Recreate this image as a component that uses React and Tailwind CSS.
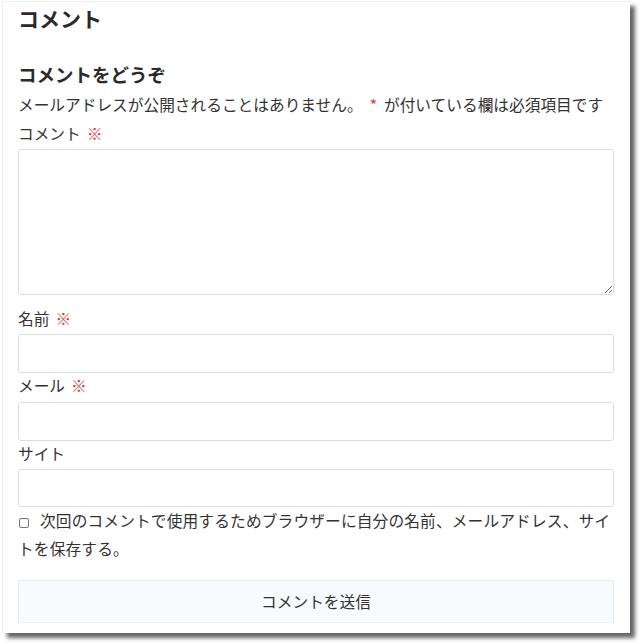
import React from "react";

const font = { fontFamily: '"Noto Sans CJK JP", "Noto Sans", sans-serif' };

function Required() {
  return <span className="ml-[6px] text-[#e0383e]">※</span>;
}

function App() {
  return (
    <div className="w-[640px] h-[643px] bg-white pt-[1px] pl-[2px]" style={font}>
      <div className="w-[628px] h-[632px] bg-white border-l border-t border-[#f0f0f0] pl-[15px] pr-[16px] text-[#333333] shadow-[5px_5px_4px_rgba(0,0,0,0.6)]">
        {/* Section title */}
        <h2 className="text-[21px] font-bold leading-[33px] text-[#2a2a2a]">コメント</h2>

        {/* Reply form */}
        <h3 className="mt-[25px] text-[18.5px] font-bold leading-[28px] text-[#2a2a2a]">
          コメントをどうぞ
        </h3>
        <p className="mt-[4px] text-[15.7px] leading-[26px] whitespace-nowrap">
          メールアドレスが公開されることはありません。
          <span className="mx-[7px] text-[#e0383e]">*</span>
          が付いている欄は必須項目です
        </p>

        <label className="block mt-[3px] text-[15.7px] leading-[26px]">
          コメント
          <Required />
        </label>
        <textarea className="block mt-[2px] w-full h-[146px] border border-[#dddddd] rounded-[3px] bg-white" />

        <label className="block mt-[11px] text-[15.7px] leading-[26px]">
          名前
          <Required />
        </label>
        <input type="text" className="block mt-[2px] w-full h-[39px] border border-[#dddddd] rounded-[3px]" />

        <label className="block text-[15.7px] leading-[26px]">
          メール
          <Required />
        </label>
        <input type="email" className="block mt-[3px] w-full h-[39px] border border-[#dddddd] rounded-[3px]" />

        <label className="block text-[15.7px] leading-[26px]">サイト</label>
        <input type="url" className="block mt-[2px] w-full h-[38px] border border-[#dddddd] rounded-[3px]" />

        <p className="text-[15.7px] leading-[28px] tracking-[0.15px]">
          <input
            type="checkbox"
            className="appearance-none inline-block align-[-1px] ml-[1px] mr-[11px] w-[10px] h-[10px] border border-[#777777] rounded-[2px] bg-white"
          />
          次回のコメントで使用するためブラウザーに自分の名前、メールアドレス、サイ
          <br />
          トを保存する。
        </p>

        <button className="block mt-[17px] w-full h-[43px] border border-[#e6eef2] bg-[#f7fbfe] text-[15.7px] text-[#333333]">
          コメントを送信
        </button>
      </div>
    </div>
  );
}

export default App;
